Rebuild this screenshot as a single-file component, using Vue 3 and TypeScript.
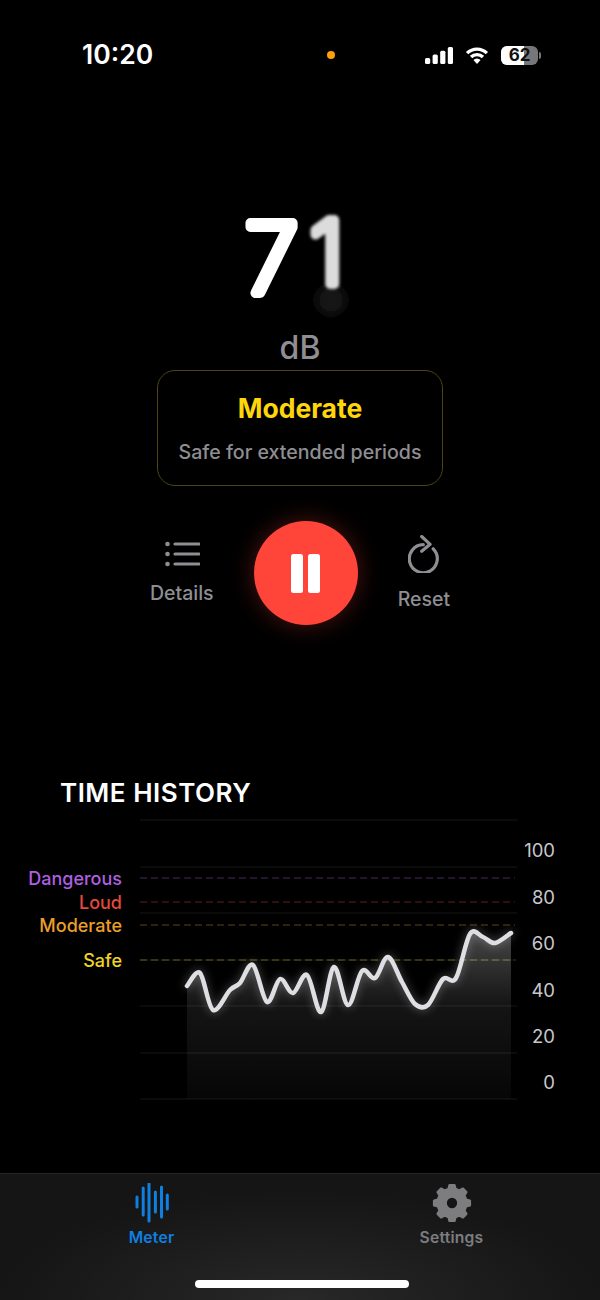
<template>
  <div class="page">
    <!-- status bar -->
    <div class="status">
      <span class="time">10:20</span>
      <span class="dot"></span>
      <div class="status-right">
        <svg class="signal" width="28" height="17" viewBox="0 0 28 17">
          <rect x="0" y="11" width="5.2" height="6" rx="1.5" />
          <rect x="7.6" y="7.5" width="5.2" height="9.5" rx="1.5" />
          <rect x="15.2" y="3.8" width="5.2" height="13.2" rx="1.5" />
          <rect x="22.8" y="0" width="5.2" height="17" rx="1.5" />
        </svg>
        <svg class="wifi" width="24" height="17" viewBox="0 0 25 18">
          <path d="M2 6.5a15 15 0 0 1 21 0" />
          <path d="M6.2 10.6a9 9 0 0 1 12.6 0" />
          <path d="M12.5 18l-3.8-4.2a5.2 5.2 0 0 1 7.6 0z" class="wifi-fill" />
        </svg>
        <div class="battery">
          <div class="battery-level"></div>
          <span class="battery-text">62</span>
          <i class="battery-nub"></i>
        </div>
      </div>
    </div>

    <!-- reading -->
    <svg class="digits" width="140" height="140" viewBox="230 190 140 140">
      <defs>
        <filter id="soft" x="-30%" y="-30%" width="160%" height="160%">
          <feGaussianBlur stdDeviation="1.4" />
        </filter>
        <filter id="ghost" x="-80%" y="-80%" width="260%" height="260%">
          <feGaussianBlur stdDeviation="5" />
        </filter>
      </defs>
      <circle cx="331" cy="300" r="15" fill="#141414" filter="url(#ghost)" />
      <text x="245" y="293" class="digit">7</text>
      <text x="310" y="284" class="digit digit-soft" filter="url(#soft)">1</text>
    </svg>
    <div class="unit">dB</div>

    <div class="level-card">
      <div class="level-name">Moderate</div>
      <div class="level-note">Safe for extended periods</div>
    </div>

    <!-- controls -->
    <div class="controls">
      <button class="side-btn">
        <svg width="36" height="26" viewBox="0 0 36 26">
          <circle cx="3.5" cy="3" r="2.3" />
          <circle cx="3.5" cy="13" r="2.3" />
          <circle cx="3.5" cy="23" r="2.3" />
          <path d="M11 3h24M11 13h24M11 23h24" class="icon-line" />
        </svg>
        <span>Details</span>
      </button>
      <button class="pause-btn" aria-label="Pause">
        <i></i><i></i>
      </button>
      <button class="side-btn">
        <svg width="32" height="38" viewBox="0 0 32 38">
          <path d="M15.3 9.7A14 14 0 1 0 25.2 13.8" class="icon-line" />
          <path d="M13.7 1.5l8.4 7.8-8.4 7" class="icon-line" />
        </svg>
        <span>Reset</span>
      </button>
    </div>

    <!-- history -->
    <h2 class="history-title">TIME HISTORY</h2>
    <svg class="chart" width="600" height="290" viewBox="0 815 600 290">
      <defs>
        <linearGradient id="area" gradientUnits="userSpaceOnUse" x1="0" y1="930" x2="0" y2="1099">
          <stop offset="0" stop-color="#fff" stop-opacity="0.28" />
          <stop offset="0.45" stop-color="#fff" stop-opacity="0.08" />
          <stop offset="1" stop-color="#fff" stop-opacity="0.025" />
        </linearGradient>
      </defs>
      <line v-for="y in gridLines" :key="y" x1="140" x2="517" :y1="y" :y2="y" class="grid" />
      <g v-for="z in zones" :key="z.name">
        <line x1="140" x2="515" :y1="z.y" :y2="z.y" class="zone-line" :stroke="z.color" />
        <text x="122" :y="z.y + 7" text-anchor="end" class="zone-label" :fill="z.color">{{ z.name }}</text>
      </g>
      <text v-for="a in axis" :key="a.label" x="555" :y="a.y + 7" text-anchor="end" class="axis-label">{{ a.label }}</text>
      <path :d="areaPath" fill="url(#area)" />
      <path :d="linePath" class="trace" />
    </svg>

    <!-- tab bar -->
    <div class="tabbar">
      <div class="tabs">
        <div class="tab tab-active">
          <svg width="36" height="40" viewBox="0 0 36 40">
            <path v-for="b in waveBars" :key="b.x" :d="`M${b.x} ${b.y1}V${b.y2}`" class="wave" />
          </svg>
          <span>Meter</span>
        </div>
        <div class="tab">
          <svg width="40" height="40" viewBox="-20 -20 40 40">
            <path :d="gearPath" class="gear" />
          </svg>
          <span>Settings</span>
        </div>
      </div>
      <div class="home-bar"></div>
    </div>
  </div>
</template>

<script setup lang="ts">
const gridLines = [820, 867, 913, 960, 1006, 1053, 1099]

const zones = [
  { name: 'Dangerous', y: 878, color: '#b05fe0' },
  { name: 'Loud', y: 902, color: '#e5483e' },
  { name: 'Moderate', y: 925, color: '#eb9f2b' },
  { name: 'Safe', y: 960, color: '#f2d422' },
]

const axis = [
  { label: '100', y: 850 },
  { label: '80', y: 897 },
  { label: '60', y: 943 },
  { label: '40', y: 990 },
  { label: '20', y: 1036 },
  { label: '0', y: 1082 },
]

// samples read off the trace
const points: [number, number][] = [
  [187, 986], [200, 973], [213, 1010], [230, 990], [240, 983], [253, 965],
  [267, 1002], [280, 979], [293, 993], [307, 975], [321, 1012], [334, 967],
  [348, 1005], [362, 971], [375, 978], [388, 957], [402, 982], [415, 1004],
  [428, 1005], [443, 979], [456, 978], [470, 934], [483, 937], [495, 943], [511, 933],
]

function smooth(pts: [number, number][]) {
  let d = `M${pts[0][0]} ${pts[0][1]}`
  for (let i = 0; i < pts.length - 1; i++) {
    const p0 = pts[i - 1] || pts[i]
    const p1 = pts[i]
    const p2 = pts[i + 1]
    const p3 = pts[i + 2] || p2
    const c1x = p1[0] + (p2[0] - p0[0]) / 6
    const c1y = p1[1] + (p2[1] - p0[1]) / 6
    const c2x = p2[0] - (p3[0] - p1[0]) / 6
    const c2y = p2[1] - (p3[1] - p1[1]) / 6
    d += `C${c1x.toFixed(1)} ${c1y.toFixed(1)} ${c2x.toFixed(1)} ${c2y.toFixed(1)} ${p2[0]} ${p2[1]}`
  }
  return d
}

const linePath = smooth(points)
const areaPath = `${linePath}V1099H187Z`

const waveBars = [
  { x: 3, y1: 14, y2: 24 },
  { x: 9.2, y1: 5, y2: 32 },
  { x: 15, y1: 1, y2: 38 },
  { x: 21.4, y1: 9, y2: 29 },
  { x: 27.5, y1: 4, y2: 34 },
  { x: 33.3, y1: 12, y2: 26 },
]

// eight tooth gear with a hole in the middle
function buildGear(teeth: number, outer: number, inner: number, hole: number) {
  let d = ''
  const step = (Math.PI * 2) / teeth
  for (let i = 0; i < teeth; i++) {
    const a = i * step - Math.PI / 2
    const pts = [
      [inner, a - step * 0.3],
      [outer, a - step * 0.17],
      [outer, a + step * 0.17],
      [inner, a + step * 0.3],
    ]
    pts.forEach(([r, t], j) => {
      const x = (r * Math.cos(t)).toFixed(2)
      const y = (r * Math.sin(t)).toFixed(2)
      d += `${i === 0 && j === 0 ? 'M' : 'L'}${x} ${y}`
    })
  }
  d += `ZM${hole} 0A${hole} ${hole} 0 1 0 ${-hole} 0A${hole} ${hole} 0 1 0 ${hole} 0Z`
  return d
}

const gearPath = buildGear(8, 18, 14.5, 6.4)
</script>

<style scoped>
.page {
  width: 600px;
  height: 1300px;
  background: #000;
  display: flex;
  flex-direction: column;
  font-family: Inter, "Liberation Sans", sans-serif;
  overflow: hidden;
}

.status {
  display: flex;
  align-items: center;
  height: 28px;
  padding: 41px 60px 0 82px;
  box-sizing: content-box;
}

.time {
  color: #fff;
  font-size: 26.5px;
  font-weight: 600;
  width: 70px;
  margin-top: -2px;
}

.dot {
  width: 8px;
  height: 8px;
  border-radius: 50%;
  background: #ff9f0a;
  margin-left: 175px;
}

.status-right {
  display: flex;
  align-items: center;
  margin-left: 90px;
  gap: 12px;
}

.signal rect {
  fill: #fff;
}

.wifi path {
  fill: none;
  stroke: #fff;
  stroke-width: 3.6;
}

.wifi .wifi-fill {
  fill: #fff;
  stroke: none;
}

.battery {
  position: relative;
  width: 37px;
  height: 19px;
  border-radius: 6px;
  background: #77777a;
}

.battery-level {
  width: 62%;
  height: 100%;
  background: #fff;
  border-radius: 6px 0 0 6px;
}

.battery-text {
  position: absolute;
  inset: 0;
  text-align: center;
  font-size: 17px;
  line-height: 19px;
  font-weight: 700;
  color: #111;
}

.battery-nub {
  position: absolute;
  right: -3px;
  top: 6px;
  width: 2px;
  height: 7px;
  border-radius: 0 2px 2px 0;
  background: #77777a;
}

.digits {
  display: block;
  margin: 121px auto 0;
}

.digit {
  font-family: Inter, sans-serif;
  font-size: 96px;
  font-weight: 200;
  fill: #fff;
  stroke: #fff;
  stroke-width: 10px;
  stroke-linejoin: round;
  stroke-linecap: round;
}

.digit-soft {
  font-size: 88px;
  fill: #dcdcdc;
  stroke: #dcdcdc;
}

.unit {
  color: #8e8e93;
  font-size: 32px;
  font-weight: 500;
  line-height: 36px;
  text-align: center;
}

.level-card {
  box-sizing: border-box;
  width: 286px;
  height: 116px;
  margin: 4px auto 0;
  border: 1px solid #4b4415;
  border-radius: 18px;
  display: flex;
  flex-direction: column;
  align-items: center;
  padding-top: 21px;
}

.level-name {
  color: #ffd60a;
  font-size: 26.5px;
  font-weight: 700;
  line-height: 32px;
}

.level-note {
  color: #8e8e93;
  font-size: 19.6px;
  font-weight: 500;
  line-height: 26px;
  margin-top: 15px;
}

.controls {
  display: flex;
  justify-content: center;
  align-items: center;
  gap: 40px;
  margin-top: 35px;
}

.controls button {
  background: none;
  border: none;
  padding: 0;
  font-family: inherit;
}

.side-btn {
  display: flex;
  flex-direction: column;
  align-items: center;
  gap: 15px;
  color: #8e8e93;
  font-size: 19.5px;
  font-weight: 500;
  line-height: 23px;
}

.side-btn svg {
  display: block;
  fill: #8e8e93;
}

.icon-line {
  fill: none;
  stroke: #8e8e93;
  stroke-width: 3.2;
  stroke-linecap: round;
  stroke-linejoin: round;
}

.pause-btn {
  width: 104px;
  height: 104px;
  border-radius: 50% !important;
  background: #ff453a !important;
  box-shadow: 0 0 24px rgba(255, 69, 58, 0.3);
  display: flex;
  align-items: center;
  justify-content: center;
  gap: 5px;
}

.pause-btn i {
  display: block;
  width: 12px;
  height: 39px;
  border-radius: 2.5px;
  background: #fff;
}

.history-title {
  margin: 152px 0 0 60px;
  color: #fff;
  font-size: 26px;
  font-weight: 600;
  letter-spacing: 0.5px;
  line-height: 32px;
}

.chart {
  display: block;
  margin-top: 6px;
}

.grid {
  stroke: #171719;
  stroke-width: 1;
}

.zone-line {
  stroke-width: 1;
  stroke-dasharray: 7 4;
  stroke-opacity: 0.42;
}

.zone-label {
  font-size: 18px;
  font-weight: 500;
}

.axis-label {
  fill: #c7c7cc;
  font-size: 18.5px;
}

.trace {
  fill: none;
  stroke: #dfdfe3;
  stroke-width: 4.5;
  stroke-linecap: round;
  stroke-linejoin: round;
  filter: drop-shadow(0 0 5px rgba(255, 255, 255, 0.35));
}

.tabbar {
  position: relative;
  margin-top: auto;
  height: 127px;
  box-sizing: border-box;
  border-top: 1px solid #262626;
  background: radial-gradient(ellipse 300px 110px at 50% 100%, #282828 0%, #151515 100%);
}

.tabs {
  display: flex;
  padding: 9px 0 0 1.5px;
}

.tab {
  display: flex;
  flex: 0 0 300px;
  flex-direction: column;
  align-items: center;
  color: #7d7d80;
  font-size: 15.7px;
  font-weight: 600;
  letter-spacing: 0.2px;
  line-height: 20px;
  gap: 5px;
}

.tab svg {
  display: block;
}

.tab-active {
  color: #0f7fe0;
}

.wave {
  fill: none;
  stroke: #0f7fe0;
  stroke-width: 3;
  stroke-linecap: round;
}

.gear {
  fill: #7d7d80;
  fill-rule: evenodd;
  stroke: #7d7d80;
  stroke-width: 2.5;
  stroke-linejoin: round;
}

.home-bar {
  position: absolute;
  left: 195px;
  bottom: 12px;
  width: 214px;
  height: 8px;
  border-radius: 4px;
  background: #fff;
}
</style>
